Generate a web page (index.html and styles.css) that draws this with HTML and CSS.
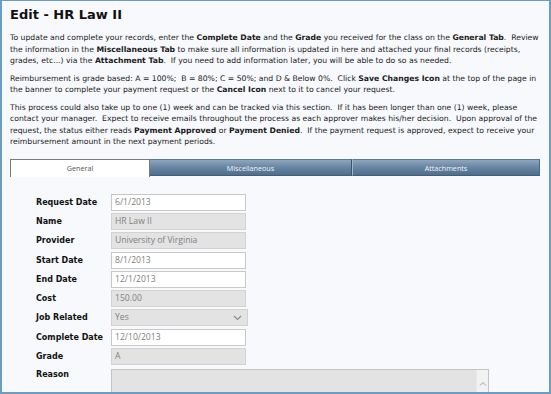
FILE: index.html
```html
<!DOCTYPE html>
<html lang="en">
<head>
    <meta charset="UTF-8">
    <title>Edit - HR Law II</title>
    <link rel="stylesheet" href="styles.css">
</head>
<body>
    <div class="frame">
        <h1>Edit - HR Law II</h1>
        <div class="intro">
            <p>To update and complete your records, enter the <b>Complete Date</b> and the <b>Grade</b> you received for the class on the <b>General Tab</b>.&nbsp; Review the information in the <b>Miscellaneous Tab</b> to make sure all information is updated in here and attached your final records (receipts, grades, etc...) via the <b>Attachment Tab</b>.&nbsp; If you need to add information later, you will be able to do so as needed.</p>
            <p>Reimbursement is grade based: A = 100%;&nbsp; B = 80%; C = 50%; and D &amp; Below 0%.&nbsp; Click <b>Save Changes Icon</b> at the top of the page in the banner to complete your payment request or the <b>Cancel Icon</b> next to it to cancel your request.</p>
            <p>This process could also take up to one (1) week and can be tracked via this section.&nbsp; If it has been longer than one (1) week, please contact your manager.&nbsp; Expect to receive emails throughout the process as each approver makes his/her decision.&nbsp; Upon approval of the request, the status either reads <b>Payment Approved</b> or <b>Payment Denied</b>.&nbsp; If the payment request is approved, expect to receive your reimbursement amount in the next payment periods.</p>
        </div>

        <div class="tabs">
            <div class="tab active">General</div>
            <div class="tab misc">Miscellaneous</div>
            <div class="tab attach">Attachments</div>
        </div>

        <div class="form">
            <div class="row">
                <label>Request Date</label>
                <div class="field">6/1/2013</div>
            </div>
            <div class="row">
                <label>Name</label>
                <div class="field off">HR Law II</div>
            </div>
            <div class="row">
                <label>Provider</label>
                <div class="field off">University of Virginia</div>
            </div>
            <div class="row">
                <label>Start Date</label>
                <div class="field">8/1/2013</div>
            </div>
            <div class="row">
                <label>End Date</label>
                <div class="field">12/1/2013</div>
            </div>
            <div class="row">
                <label>Cost</label>
                <div class="field off">150.00</div>
            </div>
            <div class="row">
                <label>Job Related</label>
                <div class="field off select">
                    <span>Yes</span>
                    <svg width="9" height="6" viewBox="0 0 9 6"><path d="M1 1 L4.5 4.5 L8 1" fill="none" stroke="#8a8a8a" stroke-width="1.2"/></svg>
                </div>
            </div>
            <div class="row">
                <label>Complete Date</label>
                <div class="field">12/10/2013</div>
            </div>
            <div class="row">
                <label>Grade</label>
                <div class="field off">A</div>
            </div>
            <div class="row top">
                <label>Reason</label>
                <div class="textarea">
                    <div class="scroll">
                        <svg width="8" height="5" viewBox="0 0 8 5"><path d="M1 4.5 L4 1.5 L7 4.5" fill="none" stroke="#a0a0a0" stroke-width="1"/></svg>
                    </div>
                </div>
            </div>
        </div>
    </div>
</body>
</html>
```

FILE: styles.css
```css
body {
    margin: 0;
    font-family: 'DejaVu Sans', Verdana, sans-serif;
    color: #111;
}
.frame {
    height: 394px;
    box-sizing: border-box;
    border: 2px solid #6b9cc4;
    border-top-width: 1px;
    background-color: #f7f9fd;
    padding: 7px 3px 0 8px;
    overflow: hidden;
}
h1 {
    font-size: 13px;
    font-weight: bold;
    margin: 0 0 10px 0;
    line-height: 14px;
}
.intro p {
    font-size: 7.7px;
    line-height: 11.5px;
    margin: 0 0 6px 0;
    color: #1a1a1a;
}
.tabs {
    display: flex;
    margin-top: 11px;
    width: 530px;
    height: 18px;
}
.tab {
    font-family: 'Open Sans', sans-serif;
    font-size: 7.2px;
    line-height: 16px;
    text-align: center;
    box-sizing: border-box;
}
.tab.active {
    width: 140px;
    background-color: #fff;
    border: 1px solid #7a7a7a;
    border-bottom: none;
    color: #555;
}
.tab.misc, .tab.attach {
    background: linear-gradient(#8ea7bf, #6a87a4 45%, #4f6e8e);
    color: #f2f5f8;
    border-top: 1px solid #5d7893;
    border-bottom: 1px solid #405d7b;
    height: 17px;
}
.tab.misc {
    width: 202px;
    border-right: 1px solid #39556f;
}
.tab.attach {
    flex: 1;
    border-left: 1px solid #a3b6c9;
    border-right: 1px solid #4d6a88;
}
.form {
    padding: 16px 0 0 26px;
}
.row {
    display: flex;
    align-items: center;
    height: 19.3px;
}
.row.top {
    align-items: flex-start;
    margin-top: 3px;
}
.row label {
    width: 75px;
    font-size: 8px;
    font-weight: bold;
}
.row.top label {
    margin-top: 1px;
}
.field {
    width: 135px;
    height: 17px;
    box-sizing: border-box;
    border: 1px solid #c8c8c8;
    background-color: #fff;
    color: #808080;
    font-family: 'Open Sans', sans-serif;
    font-size: 8.6px;
    line-height: 15px;
    padding-left: 3px;
}
.field.off {
    background-color: #e3e3e3;
    border-color: #d2d2d2;
}
.select {
    width: 137px;
    display: flex;
    justify-content: space-between;
    align-items: center;
    padding-right: 5px;
    border-color: #e3e3e3;
}
.textarea {
    width: 378px;
    height: 40px;
    box-sizing: border-box;
    border: 1px solid #c4c4c4;
    background-color: #e3e3e3;
    display: flex;
    justify-content: flex-end;
}
.scroll {
    width: 11px;
    background-color: #f2f2f2;
    border-left: 1px solid #e8e8e8;
    display: flex;
    justify-content: center;
    padding-top: 11px;
}
```
